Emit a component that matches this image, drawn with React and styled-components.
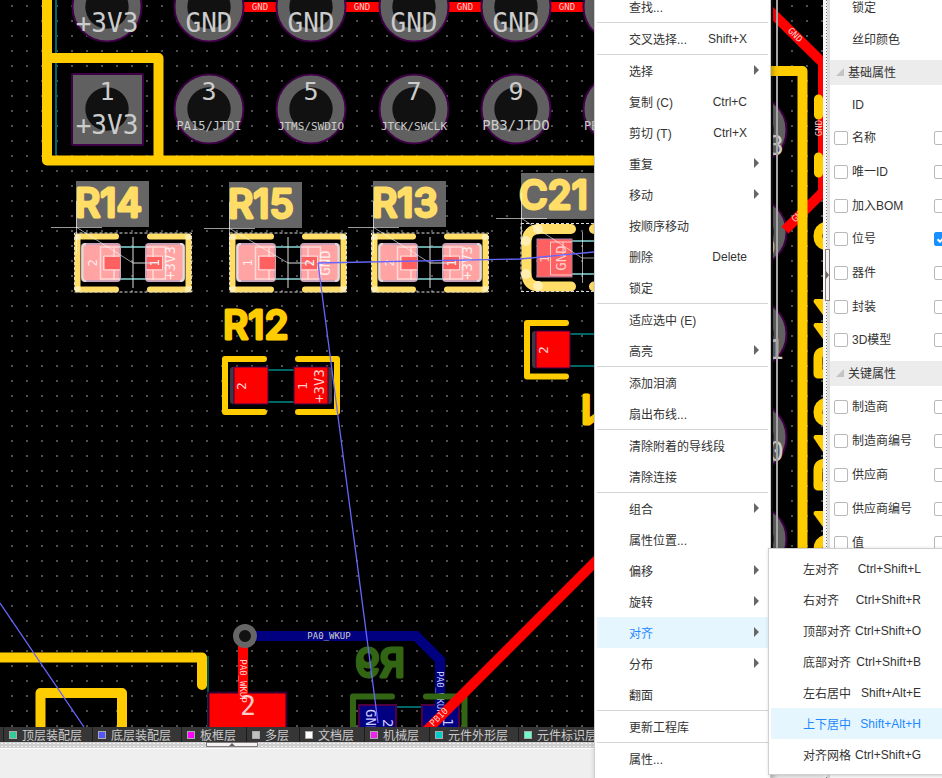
import React from "react";
import styled, { createGlobalStyle } from "styled-components";

const GlobalStyle = createGlobalStyle`
  * { box-sizing: border-box; }
  html, body { margin: 0; overflow: hidden; }
  body, button, input {
    font-family: "Liberation Sans", "Noto Sans CJK SC", sans-serif;
    font-size: 12px;
    color: #333;
  }
`;

/* ---------- page ---------- */

const Page = styled.div`
  position: relative;
  display: flex;
  height: 100vh;
  overflow: hidden;
  background: #efefef;
`;

const Workspace = styled.main`
  flex: 1;
  min-width: 0;
  display: flex;
  flex-direction: column;
`;

const Canvas = styled.svg`
  display: block;
  flex: 1;
  width: 100%;
  min-height: 0;
  background: #000;
`;

const LayerBar = styled.nav`
  display: flex;
  height: 15px;
  padding-left: 3px;
  background: #363636;
  overflow: hidden;
`;

const LayerTab = styled.button`
  display: flex;
  align-items: center;
  gap: 5px;
  flex: none;
  height: 15px;
  padding: 0 10px 0 5px;
  border: 0;
  border-left: 1px solid #1c1c1c;
  background: none;
  color: #ccc;
  line-height: 15px;
  white-space: nowrap;
`;

const LayerName = styled.span`
  padding-top: 4px;
`;

const Swatch = styled.span`
  width: 8px;
  height: 8px;
  border: 1px solid #aaa;
  background: ${(p) => p.$color};
`;

const BottomSplitter = styled.div`
  display: flex;
  height: 7px;
  padding-left: 206px;
  border-bottom: 1px solid #fff;
  background: radial-gradient(circle, #f4f4f4 1px, transparent 1px) 0 0 / 4px 3px #cfcfcf;
`;

const SideSplitter = styled.div`
  display: flex;
  flex-direction: column;
  justify-content: center;
  width: 7px;
  padding: 0 0 228px 2px;
  background:
    linear-gradient(#777 1px, transparent 1px) 3px 0 / 1px 3px no-repeat repeat,
    linear-gradient(90deg, #f6f6f6 4px, #dcdcdc 4px);
`;

const Handle = styled.button`
  display: flex;
  align-items: center;
  justify-content: center;
  flex: none;
  width: ${(p) => (p.$vertical ? "5px" : "52px")};
  height: ${(p) => (p.$vertical ? "52px" : "5px")};
  padding: 0;
  border: 1px solid #857a7a;
  background: #f3f3f3;
`;

const BottomPanel = styled.footer`
  height: 29px;
  background: #efefef;
`;

/* ---------- properties ---------- */

const Properties = styled.aside`
  width: 112px;
  flex: none;
  overflow: hidden;
  background: #fff;
`;

const TopFields = styled.div`
  margin-top: -8px;
  padding-bottom: 4px;
`;

const PlainRow = styled.div`
  height: 32px;
  padding-left: 22px;
  line-height: 33px;
`;

const GroupHeader = styled.h3`
  display: flex;
  align-items: center;
  gap: 4px;
  height: 25px;
  margin: 0;
  padding: 0 0 2px 6px;
  background: #ececec;
  font-size: 12px;
  font-weight: 400;
`;

const Group = styled.div`
  display: grid;
  grid-auto-rows: 1fr;
  height: ${(p) => p.$height}px;
  padding: ${(p) => (p.$height > 200 ? "3px 0 4px" : "4px 0 0")};
`;

const FieldRow = styled.div`
  display: flex;
  align-items: center;
  gap: 4px;
  padding-left: ${(p) => (p.$plain ? "22px" : "4px")};
`;

const FieldLabel = styled.label`
  display: flex;
  align-items: center;
  gap: 4px;
  width: 96px;
  line-height: 18px;
  white-space: nowrap;
`;

const Check = styled.input`
  appearance: none;
  flex: none;
  width: 14px;
  height: 14px;
  margin: 0;
  border: 1px solid #b9b9b9;
  border-radius: 2px;
  background: #fff;
  &:checked {
    border-color: #1890ff;
    background: #1890ff
      url("data:image/svg+xml,%3Csvg xmlns='http://www.w3.org/2000/svg' viewBox='0 0 12 12'%3E%3Cpath d='M2.5 6.2 5 8.8 9.8 3.4' fill='none' stroke='white' stroke-width='2'/%3E%3C/svg%3E");
  }
`;

/* ---------- menus ---------- */

const Menu = styled.div`
  position: absolute;
  z-index: 2;
  left: 594px;
  top: -14px;
  width: 177px;
  padding: 4px 2px;
  border: 1px solid #d0d0d0;
  background: #fff;
  box-shadow: 2px 2px 6px rgba(0, 0, 0, 0.3);
`;

const SubMenu = styled(Menu)`
  left: 100%;
  top: -69px;
  box-shadow: 1px 1px 4px rgba(0, 0, 0, 0.2);
`;

const MenuEntry = styled.div`
  position: relative;
`;

const MenuItem = styled.button`
  display: flex;
  align-items: center;
  width: 100%;
  height: 31px;
  padding: 0 9px 0 32px;
  border: 0;
  background: ${(p) => (p.$active ? "#e6f6ff" : "#fff")};
  color: ${(p) => (p.$active ? "#1e88ff" : "#333")};
  text-align: left;
  white-space: nowrap;
`;

const MenuLabel = styled.span`
  flex: 1;
`;

const Shortcut = styled.span`
  margin-right: 12px;
`;

const Arrow = styled.svg`
  margin-bottom: 2px;
`;

const Separator = styled.hr`
  height: 1px;
  margin: 0;
  border: 0;
  background: #d4d4d4;
`;

const mainItems = [
  ["查找..."], null,
  ["交叉选择...", "Shift+X"], null,
  ["选择", "", true], ["复制 (C)", "Ctrl+C"], ["剪切 (T)", "Ctrl+X"], ["重复", "", true],
  ["移动", "", true], ["按顺序移动"], ["删除", "Delete"], ["锁定"], null,
  ["适应选中 (E)"], ["高亮", "", true], null,
  ["添加泪滴"], ["扇出布线..."], null,
  ["清除附着的导线段"], ["清除连接"], null,
  ["组合", "", true], ["属性位置..."], ["偏移", "", true], ["旋转", "", true],
  ["对齐", "", true], ["分布", "", true], ["翻面"], null,
  ["更新工程库"], null,
  ["属性..."],
];

const alignItems = [
  ["左对齐", "Ctrl+Shift+L"], ["右对齐", "Ctrl+Shift+R"], ["顶部对齐", "Ctrl+Shift+O"],
  ["底部对齐", "Ctrl+Shift+B"], ["左右居中", "Shift+Alt+E"], ["上下居中", "Shift+Alt+H"],
  ["对齐网格", "Ctrl+Shift+G"],
];

function Item({ data, active }) {
  const [label, shortcut, hasSub] = data;
  return (
    <MenuItem role="menuitem" $active={active}>
      <MenuLabel>{label}</MenuLabel>
      {shortcut && <Shortcut>{shortcut}</Shortcut>}
      {hasSub && (
        <Arrow width="5" height="10" aria-hidden="true"><path d="M0 0L5 5L0 10Z" fill="#666" /></Arrow>
      )}
    </MenuItem>
  );
}

function ContextMenu() {
  return (
    <Menu role="menu">
      {mainItems.map((it, i) =>
        it ? (
          <MenuEntry key={i}>
            <Item data={it} active={it[0] === "对齐"} />
            {it[0] === "对齐" && (
              <SubMenu role="menu">
                {alignItems.map((s) => (
                  <Item key={s[0]} data={s} active={s[0] === "上下居中"} />
                ))}
              </SubMenu>
            )}
          </MenuEntry>
        ) : (
          <Separator key={i} />
        )
      )}
    </Menu>
  );
}

/* ---------- board ---------- */

const Net = styled.text`
  font-family: "DejaVu Sans Mono", monospace;
  font-size: ${(p) => p.$size}px;
  fill: ${(p) => p.$fill || "#ccc"};
  text-anchor: ${(p) => p.$anchor || "middle"};
`;

const Silk = styled.text`
  font-family: Inter, "Liberation Sans", sans-serif;
  font-size: 39px;
  font-weight: 500;
  fill: ${(p) => p.$color};
  stroke: ${(p) => p.$color};
  stroke-width: 3px;
  stroke-linejoin: round;
`;

const YELLOW = "#ffcc00";
const PALE = "#ffdd66";
const pinX = [107, 209, 311, 414, 516, 618];
const pinNames = [["+3V3", 26], ["PA15/JTDI", 12], ["JTMS/SWDIO", 11], ["JTCK/SWCLK", 11], ["PB3/JTDO", 14], ["PB4", 14]];

function Pin({ x, y, square }) {
  return (
    <g>
      {square ? (
        <rect x={x - 35} y={y - 35} width="71" height="71" rx="1" fill="#606060" stroke="#400048" strokeWidth="2" />
      ) : (
        <circle cx={x} cy={y} r="34.5" fill="#606060" stroke="#400048" strokeWidth="2" />
      )}
      <circle cx={x} cy={y} r="21.7" fill="#111" />
    </g>
  );
}

function Turned({ x, y, angle = -90, size, children, fill = "#ffd0d0", anchor }) {
  return (
    <Net $size={size} $fill={fill} $anchor={anchor} transform={`translate(${x} ${y}) rotate(${angle})`}>
      {children}
    </Net>
  );
}

function SelectedPart({ x, name, nameX, nameY, left, right, net }) {
  return (
    <g>
      <rect x={nameX} y={nameY} width="73" height="46" fill="#666" />
      <g transform={`translate(${x} 0)`}>
        <g stroke="#66a3a3" strokeWidth="2"><path d="M46 247H72M46 279H72" /></g>
        <g fill="none" stroke={PALE} strokeWidth="6" strokeLinecap="round" strokeLinejoin="round">
          <path d="M42 236.500H3.500V289.500H42" />
          <path d="M76 236.500H114.500V289.500H76" />
        </g>
        <g fill="#ffeeb0">
          <circle cx="4" cy="237" r="3" /><circle cx="4" cy="289" r="3" />
          <circle cx="114" cy="237" r="3" /><circle cx="114" cy="289" r="3" />
        </g>
        <rect x=".5" y="233" width="117" height="59" fill="none" stroke="#ddd" strokeDasharray="3 2" />
        <rect x="8" y="244" width="38" height="37" rx="3" fill="#ffa3a3" stroke="#c8a0b8" strokeWidth="2" />
        <rect x="72" y="244" width="38" height="37" rx="3" fill="#ffa3a3" stroke="#c8a0b8" strokeWidth="2" />
        <path d="M12 244Q8.500 244 8.500 248V277Q8.500 281 12 281M106 244Q109.500 244 109.500 248V277Q109.500 281 106 281" fill="none" stroke="#ddd" strokeWidth="2" />
        <path d="M26.500 280V247H46M26.500 279H46M91.500 280V247H72M91.500 279H72M40 247V257M79 247V257M40 270V280M79 270V280" stroke="#ffdada" strokeWidth="1.500" fill="none" />
        <path d="M46 256H29.500V270H46M72 256H88.500V270H72" stroke="#ffdada" fill="none" />
        <rect x="31" y="257" width="15" height="12" fill="#ff6060" />
        <rect x="73" y="257" width="15" height="12" fill="#ff6060" />
        <Turned x={23} y={263} size={12} fill="#fff0f0">{left}</Turned>
        <Turned x={85} y={263} size={12} fill="#fff">{right}</Turned>
        <Turned x={101} y={263} size={14} fill="#fff0f0">{net}</Turned>
        <path d="M59 237V288M59 263H85" stroke="#ddd" fill="none" />
      </g>
      <Silk $color={PALE} x={nameX - 1} y={nameY + 36}>{name}</Silk>
      <path
        d={`M${nameX - 25} ${nameY + 46}.500H${nameX + 26}M${nameX}.500 ${nameY + 20}V${nameY + 72}M${nameX} ${nameY + 46}L${x + 59} 263`}
        stroke="#fff" strokeOpacity=".6" fill="none"
      />
    </g>
  );
}

function LandPad({ x, y, side }) {
  return (
    <g>
      <rect x={side === "left" ? x - 4 : x + 4} y={y} width="34" height="37" rx="3" fill="#403840" />
      <rect x={x} y={y} width="34" height="37" fill="#f00" stroke="#400048" />
    </g>
  );
}

function Board() {
  return (
    <Canvas viewBox="0 0 823 727" preserveAspectRatio="xMinYMin slice" role="img" aria-label="PCB">
      <defs>
        <pattern id="grid" width="15" height="15" patternUnits="userSpaceOnUse">
          <rect x="11" y="5" width="2" height="2" fill="#505050" />
        </pattern>
      </defs>
      <rect width="823" height="727" fill="url(#grid)" />

      <path d="M56 0V155" stroke="#006666" strokeWidth="2" />
      <path d="M209 7H618" stroke="#f00" strokeWidth="10" />
      {pinX.map((x) => <Pin key={x} x={x} y={7} />)}
      {pinX.map((x, i) => <Pin key={x} x={x} y={109} square={i === 0} />)}
      <g fill="none" stroke={YELLOW} strokeWidth="10" strokeLinecap="round" strokeLinejoin="round">
        <path d="M47 -9V160.500H640M47 58H158.500V160" />
        <path d="M0 657.500H202V685M40.500 740V693H122V740" />
      </g>
      {pinX.slice(0, 5).map((x, i) => (
        <Net key={x} $size={26} x={x} y={32}>{i ? "GND" : "+3V3"}</Net>
      ))}
      {pinX.slice(0, 5).map((x, i) => (
        <Net key={x} $size={25} x={x} y={100}>{i * 2 + 1}</Net>
      ))}
      {pinX.slice(0, 5).map((x, i) => (
        <Net key={x} $size={pinNames[i][1]} x={x} y={i ? 130 : 134}>{pinNames[i][0]}</Net>
      ))}
      <Net $size={12} $anchor="start" x={584} y={130}>PB4</Net>
      {[260, 362, 465, 567].map((x) => (
        <Net key={x} $size={9} $fill="#ffcccc" x={x} y={10}>GND</Net>
      ))}

      <SelectedPart x={74} name="R14" nameX={76} nameY={181} left="2" right="1" net="+3V3" />
      <SelectedPart x={229} name="R15" nameX={229} nameY={182} left="1" right="2" net="GND" />
      <SelectedPart x={371} name="R13" nameX={373} nameY={181} left="2" right="1" net="+3V3" />

      <g>
        <rect x="521" y="173" width="90" height="46" fill="#666" />
        <Silk $color={PALE} x="519" y="209">C21</Silk>
        <path d="M572 241H620M572 274H620" stroke="#66a3a3" strokeWidth="2" />
        <g fill="none" stroke={PALE} strokeWidth="10" strokeLinecap="round">
          <path d="M571 229H540Q526.500 229 526.500 243V273Q526.500 286.500 540 286.500H571" />
          <path d="M594 229H620M594 286.500H620" />
        </g>
        <g fill="#ffeeb0">
          <circle cx="538" cy="229" r="5" /><circle cx="526" cy="241" r="5" />
          <circle cx="526" cy="274" r="5" /><circle cx="538" cy="286" r="5" />
        </g>
        <rect x="521" y="223.500" width="120" height="68" fill="none" stroke="#ddd" strokeDasharray="3 2" />
        <rect x="537" y="239" width="35" height="38" fill="#ff6060" stroke="#b080a0" />
        <path d="M572 242H550.500V275H572M563 242V254" fill="none" stroke="#ffd0d0" />
        <Turned x={549} y={259} size={13}>1</Turned>
        <Turned x={566} y={258} size={14}>GND</Turned>
        <path d="M582.500 232V283M582 258H600M496 218.500H547M521.500 193V245M521 218L582 258" stroke="#fff" strokeOpacity=".6" fill="none" />
      </g>

      <path d="M267 370H296M267 402H296M569 334H600M569 366H600" stroke="#006666" strokeWidth="2" />
      <LandPad x={234} y={367} side="left" />
      <LandPad x={294} y={367} side="right" />
      <LandPad x={536} y={331} side="left" />
      <g fill="none" stroke={YELLOW} strokeWidth="6" strokeLinecap="round" strokeLinejoin="round">
        <path d="M264 359H225V412H264M298 359H337V412H298M566 323H527V376.500H566" />
      </g>
      <Silk $color={YELLOW} x="223" y="339">R12</Silk>
      <Silk $color={YELLOW} transform="translate(597 395) rotate(180)">1</Silk>
      <Turned x={246} y={386} size={13}>2</Turned>
      <Turned x={307} y={386} size={13}>1</Turned>
      <Turned x={324} y={386} size={14}>+3V3</Turned>
      <Turned x={548} y={350} size={13}>2</Turned>

      <path d="M208 656V727" stroke="#005555" strokeWidth="2" />
      <rect x="208.500" y="692.500" width="78" height="40" fill="#f00" stroke="#300030" strokeWidth="2" />
      <path d="M243 636V694" stroke="#f00" strokeWidth="10" />
      <Net $size={26} $fill="#ffcccc" x="248" y="715">2</Net>
      <Turned x={240} y={681} angle={90} size={9}>PA0_WKUP</Turned>

      <path d="M397 707H422" stroke="#006666" strokeWidth="2" />
      <rect x="359" y="705" width="37" height="30" fill="#000080" stroke="#500040" strokeWidth="2" />
      <rect x="422" y="705" width="37" height="30" fill="#000080" stroke="#500040" strokeWidth="2" />
      <path d="M245 636H416L440 660V727" fill="none" stroke="#000080" strokeWidth="10" />
      <circle cx="245" cy="636" r="9" fill="#111" stroke="#666" strokeWidth="6" />
      <Net $size={9} x="329" y="639">PA0_WKUP</Net>
      <Turned x={437} y={693} angle={90} size={9} fill="#ccf">PA0_WKUP</Turned>
      <g fill="none" stroke="#336614" strokeWidth="6" strokeLinecap="round" strokeLinejoin="round">
        <path d="M392 696.500H353V740M426 696.500H464.500V740" />
      </g>
      <Silk $color="#336614" transform="translate(405 677) scale(-1 1)">R9</Silk>
      <Turned x={366} y={709} angle={90} size={14} fill="#ccf" anchor="start">GND</Turned>
      <Turned x={383} y={719} angle={90} size={14} fill="#ccf" anchor="start">2</Turned>
      <Turned x={443} y={718} angle={90} size={14} fill="#ccf" anchor="start">1</Turned>
      <path d="M418 739L600 557" stroke="#f00" strokeWidth="10" />
      <Turned x={441} y={719} angle={-45} size={9}>PB10</Turned>

      <path d="M318 263L520 259L594 252M318 263L378 723M0 603L84 727" fill="none" stroke="#6666ff" strokeWidth="1.300" />

      {[130, 232, 334, 437, 539].map((y) => <Pin key={y} x={752} y={y} />)}
      <path d="M765 6L823 63V192L785 230" fill="none" stroke="#f00" strokeWidth="10" />
      <Net $size={26} $anchor="end" x="784" y="155">3</Net>
      <Net $size={26} $anchor="end" x="776" y="257">D</Net>
      <Net $size={26} $anchor="end" x="784" y="359">1</Net>
      <Net $size={26} $anchor="end" x="784" y="461">0</Net>
      <Turned x={793} y={37} angle={45} size={9}>GND</Turned>
      <Turned x={822} y={128} size={9}>GND</Turned>
      <Turned x={801} y={217} angle={-45} size={9}>GND</Turned>
      <path d="M777 0V560" stroke="#aaa" strokeWidth="2" />
      <path d="M771 0V727" stroke="#111" strokeWidth="4" />
      <g fill="none" stroke={YELLOW} strokeWidth="10" strokeLinecap="round" strokeLinejoin="round">
        <path d="M760 71H802.500V740" />
        <path d="M818.500 99V115M818.500 157V173" strokeWidth="9" />
        <path d="M826 226Q818 228 818 236T826 246M826 351Q818 351 818 358V374H826M826 402Q818 404 818 412T826 422M826 463Q818 463 818 470V486H826M826 539Q818 541 818 549" strokeWidth="9" />
      </g>
      <path d="M823 299H815Q812 301 815 304L823 315ZM823 323H815Q812 325 815 328L823 339ZM823 435H815Q812 437 815 440L823 452ZM823 511H815Q812 513 815 516L823 527Z" fill={YELLOW} />
    </Canvas>
  );
}

/* ---------- panels ---------- */

const layers = [
  ["顶层装配层", "#33cc99"], ["底层装配层", "#5555ff"], ["板框层", "#ff00ff"], ["多层", "#c0c0c0"],
  ["文档层", "#ffffff"], ["机械层", "#f022f0"], ["元件外形层", "#00cccc"], ["元件标识层", "#66ffcc"],
];

const basicFields = ["ID", "名称", "唯一ID", "加入BOM", "位号", "器件", "封装", "3D模型"];
const keyFields = ["制造商", "制造商编号", "供应商", "供应商编号", "值"];

function Header({ children }) {
  return (
    <GroupHeader>
      <svg width="8" height="8" aria-hidden="true"><path d="M8 0V8H0Z" fill="#c4c4c4" /></svg>
      {children}
    </GroupHeader>
  );
}

function Field({ name }) {
  if (name === "ID") return <FieldRow $plain>{name}</FieldRow>;
  return (
    <FieldRow>
      <FieldLabel><Check type="checkbox" />{name}</FieldLabel>
      <Check type="checkbox" aria-label={name} defaultChecked={name === "位号"} />
    </FieldRow>
  );
}

export default function App() {
  return (
    <Page>
      <GlobalStyle />
      <Workspace>
        <Board />
        <LayerBar>
          {layers.map(([name, color]) => (
            <LayerTab key={name}><Swatch $color={color} /><LayerName>{name}</LayerName></LayerTab>
          ))}
        </LayerBar>
        <BottomSplitter>
          <Handle aria-label="展开底部面板">
            <svg width="6" height="3"><path d="M0 3L3 0L6 3Z" fill="#706464" /></svg>
          </Handle>
        </BottomSplitter>
        <BottomPanel />
      </Workspace>
      <SideSplitter>
        <Handle $vertical aria-label="收起属性面板">
          <svg width="3" height="8"><path d="M0 0L3 4L0 8Z" fill="#706464" /></svg>
        </Handle>
      </SideSplitter>
      <Properties>
        <TopFields>
          <PlainRow>锁定</PlainRow>
          <PlainRow>丝印颜色</PlainRow>
        </TopFields>
        <Header>基础属性</Header>
        <Group $height={276}>{basicFields.map((f) => <Field key={f} name={f} />)}</Group>
        <Header>关键属性</Header>
        <Group $height={174}>{keyFields.map((f) => <Field key={f} name={f} />)}</Group>
      </Properties>
      <ContextMenu />
    </Page>
  );
}
